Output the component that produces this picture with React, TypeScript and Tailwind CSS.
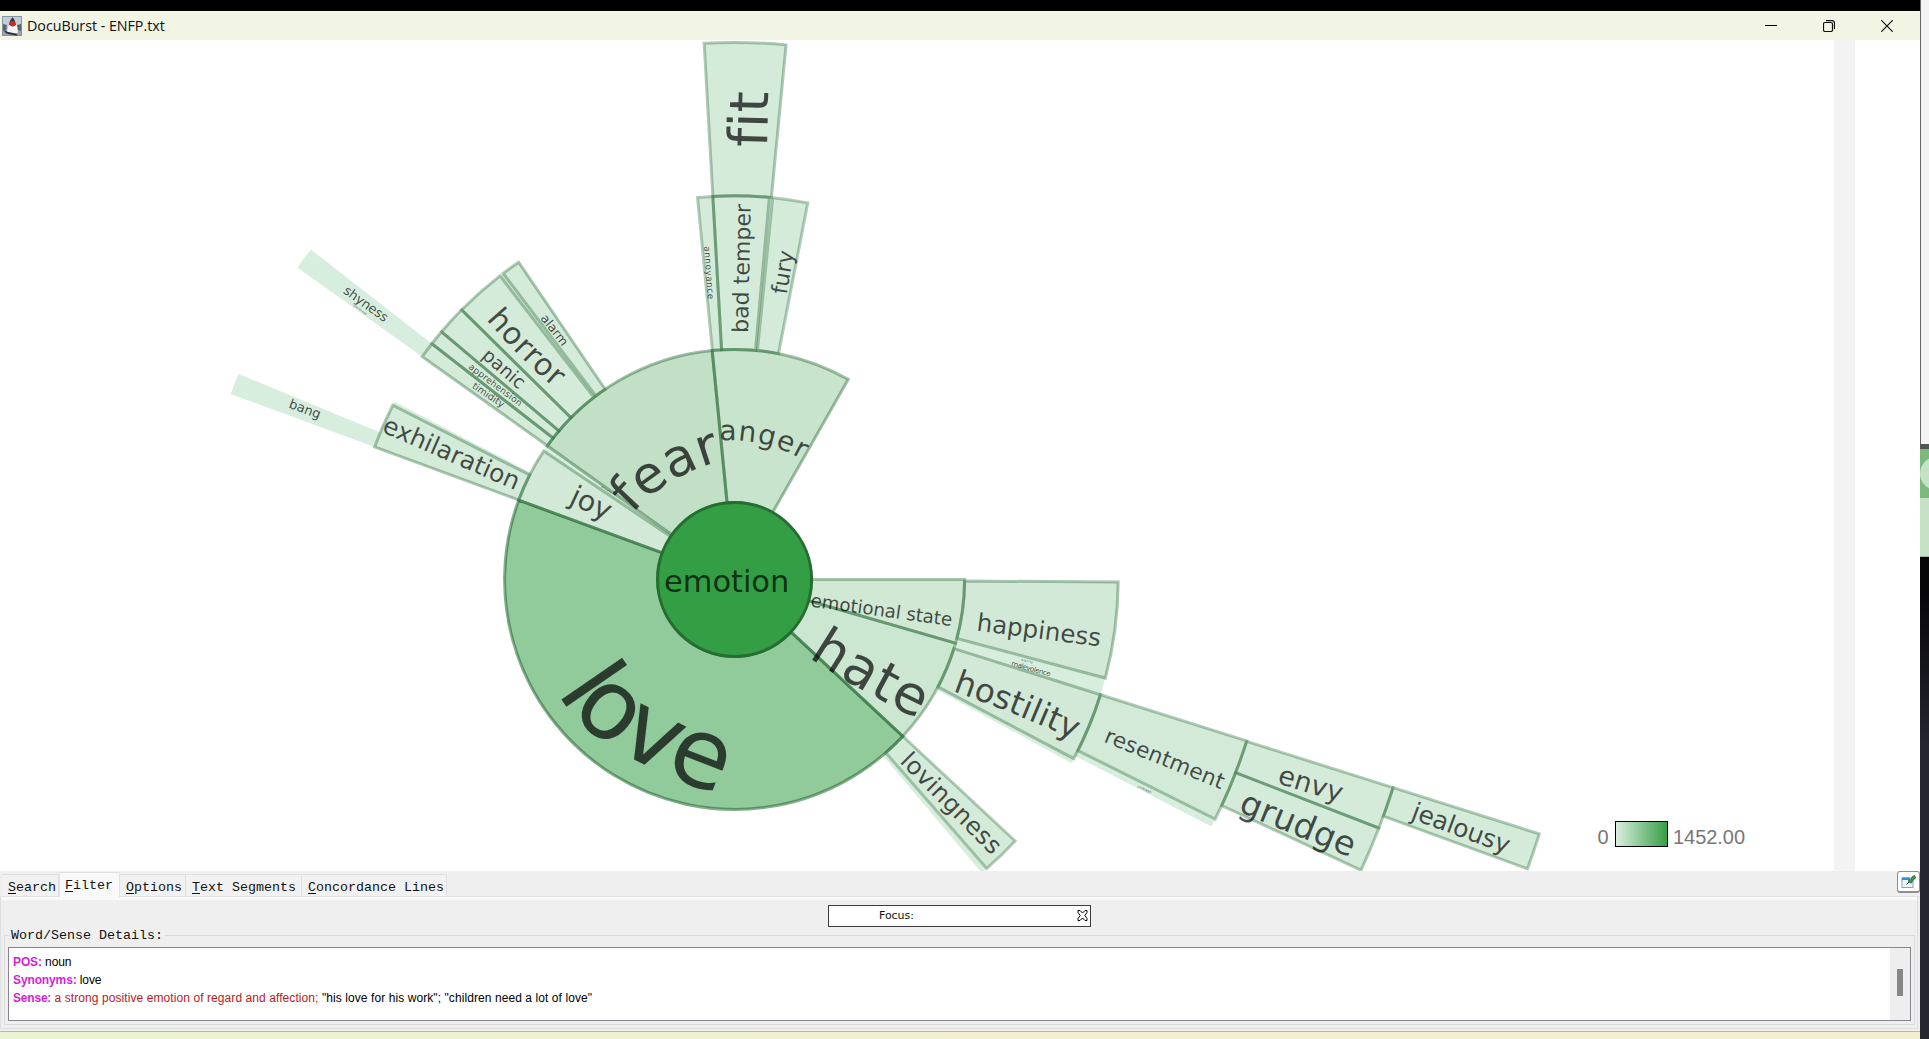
import React from "react";

const CX = 734.6;
const CY = 579.4;
const RINGS = [77, 230, 383.6, 537, 690.6, 844];

type Slice = { ring: number; from: number; to: number; fill: string; line?: number };

const LEAF = "#d4ebda";
const FAINT = "#d7eddd";

const slices: Slice[] = [
  { ring: 1, from: 0, to: 16.1, fill: "#d1e8d5", line: 0.36 },
  { ring: 1, from: 16.1, to: 43, fill: "#cbe6d1", line: 0.36 },
  { ring: 1, from: 43, to: 200.15, fill: "#91ca9b", line: 0.52 },
  { ring: 1, from: 200.15, to: 213.9, fill: "#d2e9d8", line: 0.36 },
  { ring: 1, from: 213.9, to: 215.5, fill: FAINT },
  { ring: 1, from: 215.5, to: 264.4, fill: "#c1e0c6", line: 0.42 },
  { ring: 1, from: 264.4, to: 299.6, fill: "#c8e4cd", line: 0.4 },
  { ring: 2, from: 0.4, to: 14.9, fill: "#d2e9d7", line: 0.36 },
  { ring: 2, from: 14.9, to: 17.5, fill: FAINT },
  { ring: 2, from: 17.5, to: 27.85, fill: "#d2e9d7", line: 0.36 },
  { ring: 2, from: 27.85, to: 28.6, fill: FAINT },
  { ring: 2, from: 43, to: 48.9, fill: LEAF, line: 0.32 },
  { ring: 2, from: 48.9, to: 49.9, fill: FAINT },
  { ring: 2, from: 200.2, to: 207, fill: LEAF, line: 0.36 },
  { ring: 2, from: 207, to: 207.6, fill: FAINT },
  { ring: 2, from: 215.5, to: 217.9, fill: LEAF, line: 0.36 },
  { ring: 2, from: 217.9, to: 220.2, fill: LEAF, line: 0.36 },
  { ring: 2, from: 220.2, to: 224.65, fill: LEAF, line: 0.36 },
  { ring: 2, from: 224.65, to: 232.3, fill: LEAF, line: 0.36 },
  { ring: 2, from: 232.3, to: 232.9, fill: FAINT },
  { ring: 2, from: 232.9, to: 235.75, fill: LEAF, line: 0.36 },
  { ring: 2, from: 264.45, to: 266.75, fill: LEAF, line: 0.32 },
  { ring: 2, from: 266.75, to: 275.2, fill: LEAF, line: 0.36 },
  { ring: 2, from: 275.2, to: 275.7, fill: FAINT },
  { ring: 2, from: 275.7, to: 281, fill: LEAF, line: 0.32 },
  { ring: 3, from: 266.75, to: 275.5, fill: LEAF, line: 0.34 },
  { ring: 3, from: 215.5, to: 217.9, fill: FAINT },
  { ring: 3, from: 200.2, to: 202.5, fill: FAINT },
  { ring: 3, from: 17.5, to: 26.5, fill: "#d3ead8", line: 0.34 },
  { ring: 3, from: 26.5, to: 27.4, fill: FAINT },
  { ring: 4, from: 17.55, to: 21.1, fill: LEAF, line: 0.34 },
  { ring: 4, from: 21.1, to: 24.9, fill: LEAF, line: 0.34 },
  { ring: 5, from: 17.55, to: 20.05, fill: LEAF, line: 0.34 },
];

function slicePath({ ring, from, to }: Slice) {
  const r0 = RINGS[ring - 1];
  const r1 = RINGS[ring];
  const at = (r: number, deg: number) => {
    const a = (deg * Math.PI) / 180;
    return `${(CX + r * Math.cos(a)).toFixed(2)} ${(CY + r * Math.sin(a)).toFixed(2)}`;
  };
  const large = to - from > 180 ? 1 : 0;
  return `M${at(r0, from)}L${at(r1, from)}A${r1} ${r1} 0 ${large} 1 ${at(r1, to)}L${at(r0, to)}A${r0} ${r0} 0 ${large} 0 ${at(r0, from)}Z`;
}

// Each label runs along a quadratic curve: a (start), b (end), optional control point c.
type Label = { t: string; s: number; a: [number, number]; b: [number, number]; c?: [number, number] };

const labels: Label[] = [
  { t: "love", s: 97, a: [558, 691.5], b: [720, 795], c: [587, 750] },
  { t: "fear", s: 52, a: [633.5, 514], b: [723, 460.5], c: [664, 477] },
  { t: "anger", s: 28, a: [720.5, 440.5], b: [803, 459.5], c: [766, 438] },
  { t: "emotion", s: 30.5, a: [665, 591.7], b: [790.5, 591.7] },
  { t: "joy", s: 28.5, a: [569, 503], b: [607.5, 521] },
  { t: "emotional state", s: 18.3, a: [811, 606.5], b: [952.5, 626] },
  { t: "hate", s: 54, a: [809, 657.2], b: [919, 719], c: [864, 693] },
  { t: "happiness", s: 24.5, a: [977, 630.5], b: [1101, 646.5] },
  { t: "malevolence", s: 7, a: [1012, 665.5], b: [1051, 676.5] },
  { t: "dignity", s: 3, a: [1022, 660.5], b: [1034, 663.5] },
  { t: "hostility", s: 32.7, a: [953.5, 691], b: [1075, 740], c: [1016, 713] },
  { t: "resentment", s: 21.6, a: [1104, 741.5], b: [1222, 789.5] },
  { t: "umbrage", s: 3.4, a: [1138, 787], b: [1152, 793.5] },
  { t: "envy", s: 27, a: [1277.5, 783], b: [1341, 802.5] },
  { t: "grudge", s: 33.7, a: [1238.5, 811.5], b: [1351.5, 857.5] },
  { t: "jealousy", s: 25, a: [1411, 818.5], b: [1507.5, 854] },
  { t: "lovingness", s: 24.3, a: [900, 762], b: [993, 856] },
  { t: "exhilaration", s: 24.8, a: [382, 431.5], b: [516.5, 490.5] },
  { t: "bang", s: 13.2, a: [289, 407.5], b: [320, 419] },
  { t: "shyness", s: 13, a: [343.5, 292.5], b: [385.5, 322.5] },
  { t: "timidness", s: 3, a: [354, 306], b: [367, 315] },
  { t: "horror", s: 30.5, a: [487, 319.5], b: [555.5, 388], c: [518, 356] },
  { t: "panic", s: 18.5, a: [482, 357], b: [520, 390] },
  { t: "apprehension", s: 9, a: [469, 368], b: [520.5, 406.8] },
  { t: "timidity", s: 9.6, a: [472.5, 387.5], b: [503, 408] },
  { t: "alarm", s: 12.5, a: [541, 318.5], b: [563.5, 347] },
  { t: "annoyance", s: 8.8, a: [705, 246.5], b: [709, 299.5] },
  { t: "bad temper", s: 22, a: [749, 333], b: [751.8, 204] },
  { t: "fury", s: 22.2, a: [787.8, 295], b: [795, 251.5] },
  { t: "fit", s: 54, a: [768, 147.5], b: [769.4, 91.5] },
  { t: "anxiety", s: 3, a: [602, 487], b: [612, 494] },
];

function curveLength({ a, b, c }: Label) {
  if (!c) return Math.hypot(b[0] - a[0], b[1] - a[1]);
  let total = 0;
  let prev = a;
  for (let i = 1; i <= 40; i++) {
    const t = i / 40;
    const u = 1 - t;
    const p: [number, number] = [
      u * u * a[0] + 2 * u * t * c[0] + t * t * b[0],
      u * u * a[1] + 2 * u * t * c[1] + t * t * b[1],
    ];
    total += Math.hypot(p[0] - prev[0], p[1] - prev[1]);
    prev = p;
  }
  return total;
}

function Sunburst() {
  return (
    <svg className="block h-[831px] w-[1834px] shrink-0" viewBox="0 40 1834 831">
      <defs>
        <linearGradient id="scale" x1="0" x2="1" y1="0" y2="0">
          <stop offset="0" stopColor="#dcefe0" />
          <stop offset="1" stopColor="#349e45" />
        </linearGradient>
        {labels.map((l, i) => {
          const c = l.c ?? [(l.a[0] + l.b[0]) / 2, (l.a[1] + l.b[1]) / 2];
          return <path key={l.t} id={`base-${i}`} d={`M${l.a[0]} ${l.a[1]}Q${c[0]} ${c[1]} ${l.b[0]} ${l.b[1]}`} />;
        })}
      </defs>
      {slices.map((s, i) => (
        <path key={i} d={slicePath(s)} fill={s.fill} />
      ))}
      {slices
        .filter((s) => s.line)
        .map((s, i) => (
          <path key={i} d={slicePath(s)} fill="none" stroke="#1b6029" strokeOpacity={s.line} strokeWidth="3" />
        ))}
      <circle cx={CX} cy={CY} r={77} fill="#349e45" stroke="#236e30" strokeWidth="3" />
      <g
        className="[font-variant-ligatures:none]"
        fill="#000"
        fillOpacity="0.7"
        fontFamily='"DejaVu Sans", sans-serif'
        transform="translate(-1 0)"
      >
        {labels.map((l, i) => (
          <text key={l.t} fontSize={l.s}>
            <textPath href={`#base-${i}`} textLength={curveLength(l) - 0.2}>
              {l.t}
            </textPath>
          </text>
        ))}
      </g>
      <g fill="#777" fontFamily='"Liberation Sans", sans-serif' fontSize="20">
        <text x="1597.500" y="844">0</text>
        <text x="1673" y="844" textLength="72">1452.00</text>
      </g>
      <rect x="1615.5" y="821.5" width="52" height="25" fill="url(#scale)" stroke="#000" />
    </svg>
  );
}

function DukeIcon() {
  return (
    <svg className="size-5" viewBox="0 0 20 20">
      <rect x="0.5" y="0.5" width="19" height="19" fill="#c3cdd6" stroke="#8496a5" />
      <path d="M1 12h18v7H1z" fill="#98a2ac" />
      <path d="M1 8l4 1-1 5-3 1zM19 8l-4 1 1 5 3 1z" fill="#5a646e" />
      <path d="M10.500 2C8 5 6.500 10 4.500 16c3 .8 4 .3 6 .8s4 .5 5.500 0C15.500 10 13.500 5 10.500 2z" fill="#f4f4f4" />
      <path d="M10.500 1.200C8.800 3 7.500 5.500 7 8.500c2.500 2.500 5 2.500 7 0C13.300 5.500 12.300 3 10.500 1.200z" fill="#34363c" />
      <circle cx="10.500" cy="7.500" r="2.600" fill="#d42a22" />
      <path d="M3 15c2 3 8 2.500 12 4" stroke="#2c2f34" strokeWidth="1.800" fill="none" />
    </svg>
  );
}

function TitleBar() {
  return (
    <header className="flex h-[29px] items-center bg-[#f2f4e4] pl-0.5">
      <DukeIcon />
      <span className="ml-[5px] whitespace-nowrap font-['Open_Sans',sans-serif] text-[14.3px] leading-5 tracking-[-0.04px] text-[#111]">
        DocuBurst - ENFP.txt
      </span>
      <div className="ml-auto flex items-center gap-[46px] pr-[27px]">
        <svg className="h-3 w-3" viewBox="0 0 12 12">
          <path d="M0 5.500h12" stroke="#000" />
        </svg>
        <svg className="h-3 w-3" viewBox="0 0 12 12" fill="none" stroke="#111">
          <rect x="0.500" y="2.500" width="9" height="9" rx="1.500" strokeWidth="1.200" />
          <path d="M3 .6h6a2.500 2.500 0 0 1 2.500 2.500v6" strokeWidth="1.200" />
        </svg>
        <svg className="h-3 w-3" viewBox="0 0 12 12">
          <path d="M.3.3l11.400 11.400M11.700.3L.3 11.700" stroke="#111" strokeWidth="1.200" />
        </svg>
      </div>
    </header>
  );
}

function Tab({ label, width, active }: { label: string; width: string; active?: boolean }) {
  return (
    <div
      className={
        active
          ? `${width} z-10 -mb-px h-[25px] border-x border-t border-[#e2e2e2] bg-[#f9f9f9] pl-[5px] leading-[25px]`
          : `${width} h-[22px] border-r border-t border-[#e0e0e0] bg-[#f1f1f1] pl-[6px] leading-[25px]`
      }
    >
      <span className="underline underline-offset-2">{label[0]}</span>
      {label.slice(1)}
    </div>
  );
}

function PinButton() {
  return (
    <div className="flex h-[22px] w-[23px] items-center justify-center rounded-[3px] border border-b-2 border-[#8f8f8f] bg-white">
      <svg className="h-[15px] w-[15px]" viewBox="0 0 15 15">
        <rect x="1" y="4" width="11" height="9.500" fill="#e9f6fc" stroke="#8f9fb5" />
        <path d="M1 3.500h8v2.500H1z" fill="#2f8fd8" />
        <path d="M8 8L5.500 10.500" stroke="#333" />
        <path d="M7 7l2.500-1 2-3.500 2-1 1.200 2.500-2.700 2-1.500 3-1.500-.5z" fill="#3f9a45" stroke="#1e5c2a" strokeWidth="0.800" />
      </svg>
    </div>
  );
}

function DetailsPanel() {
  return (
    <section className="h-[160px] bg-[#efefef] font-['Liberation_Mono',monospace] text-[13.33px] text-[#111]">
      <div className="flex h-[26px] items-end border-b border-[#e2e2e2] pl-[2px]">
        <Tab label="Search" width="w-[57px]" />
        <Tab label="Filter" width="w-[61px]" active />
        <Tab label="Options" width="w-[66px]" />
        <Tab label="Text Segments" width="w-[116px]" />
        <Tab label="Concordance Lines" width="w-[145px]" />
        <div className="ml-auto self-start">
          <PinButton />
        </div>
      </div>
      <div className="mr-[2px] flex h-[132px] flex-col border-x border-b border-[#dedede]">
        <div className="h-[3px] shrink-0 bg-[#f9f9f9]" />
        <div className="ml-[827px] mt-[5px] flex h-[22px] w-[263px] shrink-0 items-center border border-[#3c3c40] bg-white pl-[50px] pr-[2px] pt-px font-['DejaVu_Sans',sans-serif] text-[11px] tracking-[-0.05px]">
          <span>Focus:</span>
          <svg className="mb-[3px] ml-auto size-[11px]" viewBox="0 0 11 11">
            <path d="M1 .5h2L5.500 3 8 .5h2v2L7.800 5.500 10 8.500v2H8L5.500 8 3 10.500H1v-2L3.200 5.500 1 2.500z" fill="#fff" stroke="#000" />
          </svg>
        </div>
        <fieldset className="mx-[3px] mt-0 h-[98px] w-[1911px] border border-[#dadada] px-[3px] pb-[3px]">
          <legend className="ml-[1px] h-[16px] px-[2px] leading-[18px]">Word/Sense Details:</legend>
          <div className="mt-[4px] flex h-[74px] w-[1903px] border border-[#85858d] bg-white font-['Liberation_Sans',sans-serif] text-[12px] leading-[18px] text-black">
            <div className="grow pl-[4px] pt-[5px]">
              <p className="tracking-[-0.12px]">
                <b className="text-[#d41fd4]">POS:</b> noun
              </p>
              <p className="tracking-[-0.12px]">
                <b className="text-[#d41fd4]">Synonyms:</b> love
              </p>
              <p className="tracking-[0.08px]">
                <b className="tracking-[-0.2px] text-[#d41fd4]">Sense:</b>{" "}
                <span className="text-[#b91c1c]">a strong positive emotion of regard and affection;</span>{" "}
                "his love for his work"; "children need a lot of love"
              </p>
            </div>
            <div className="flex w-5 justify-center bg-[#eee] pt-[21px]">
              <div className="h-[27px] w-[6px] bg-[#878787]" />
            </div>
          </div>
        </fieldset>
      </div>
    </section>
  );
}

export default function App() {
  return (
    <main className="flex h-[1039px] w-[1929px] overflow-hidden bg-white">
      <div className="flex w-[1920px] shrink-0 flex-col">
        <div className="h-[11px] bg-black" />
        <TitleBar />
        <div className="flex h-[831px]">
          <Sunburst />
          <div className="w-[21px] bg-[#f3f3f3]" />
        </div>
        <DetailsPanel />
        <div className="h-2 border-t border-[#b8b8b0] bg-linear-to-r from-[#eaf3d2] via-[#f3f0d2] to-[#f1efcf]" />
      </div>
      <div className="flex w-[9px] shrink-0 flex-col overflow-hidden">
        <div className="h-[444px] border-l border-[#666] bg-[#f3f3f3]" />
        <div className="h-[5px] bg-[#505556]" />
        <div className="flex h-[49px] items-center bg-[#7aba7c]">
          <div className="h-[33px] w-[33px] shrink-0 rounded-full bg-[#c5e1c6]" />
        </div>
        <div className="h-[59px] border-b border-[#9fb3a0] bg-[#c5e1c6]" />
        <div className="h-[30px] bg-[#060609]" />
        <div className="h-[160px] bg-linear-to-b from-[#060609] to-[#262631]" />
        <div className="grow bg-[#262631]" />
      </div>
    </main>
  );
}
